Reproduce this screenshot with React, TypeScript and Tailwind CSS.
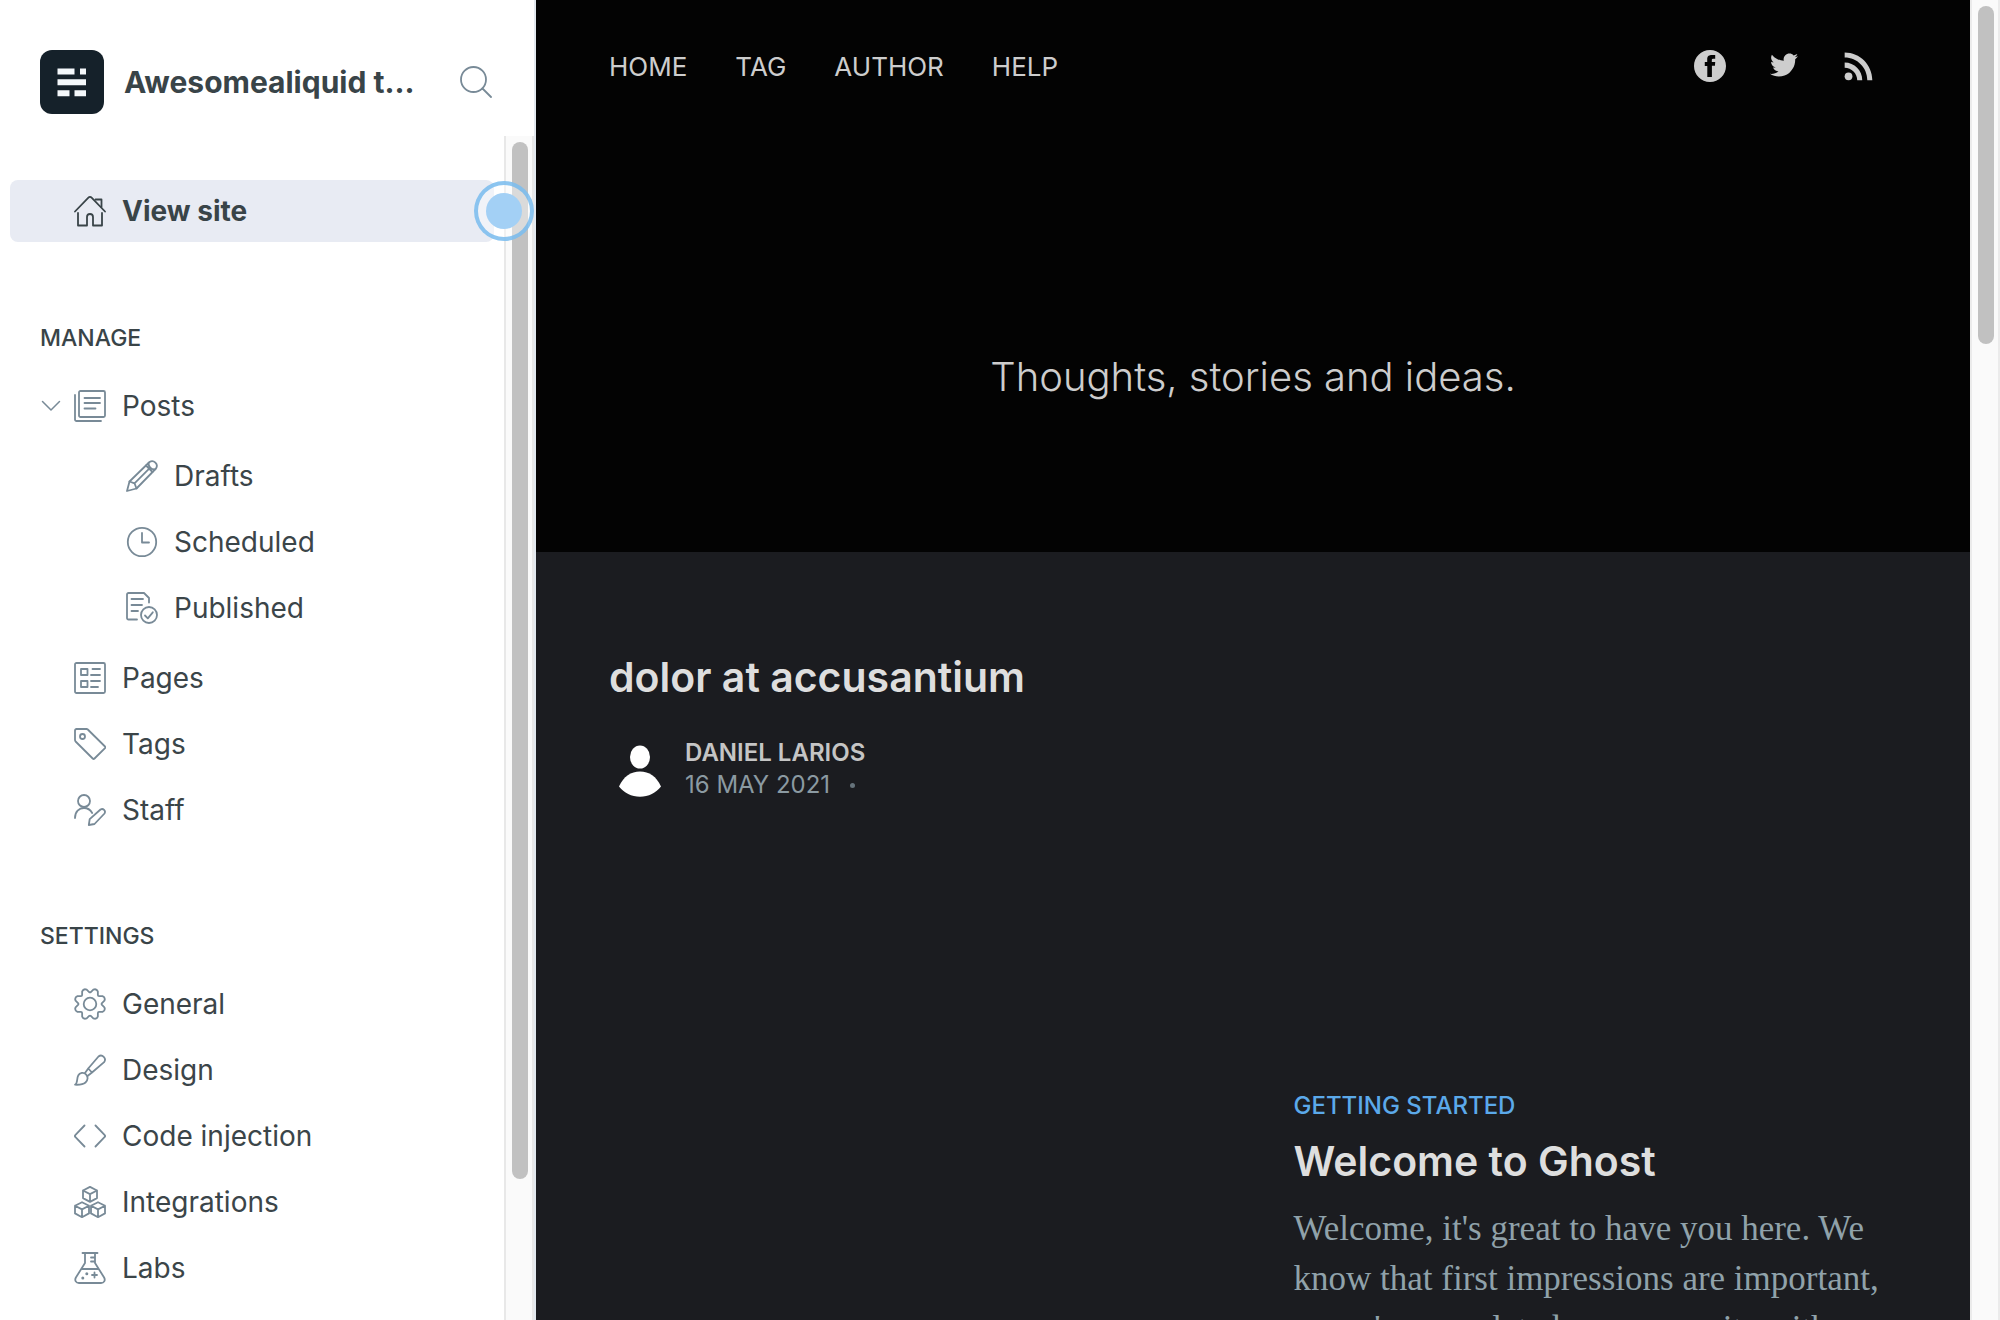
import React from "react";

const gearPath = (() => {
  const at = (deg: number, r: number) => {
    const a = (deg * Math.PI) / 180;
    return `${(16 + r * Math.cos(a)).toFixed(2)} ${(16 + r * Math.sin(a)).toFixed(2)}`;
  };
  let d = "";
  for (let k = 0; k < 8; k++) {
    const v = k * 45;
    d += `${k === 0 ? "M" : "L"}${at(v - 4, 12)}Q${at(v, 11.2)} ${at(v + 4, 12)}`;
    d += `L${at(v + 13, 14.8)}Q${at(v + 22.5, 17)} ${at(v + 32, 14.8)}`;
  }
  return d + "Z";
})();

const cube = (x: number, y: number) =>
  `M${x} ${y - 7.5}l7 3.6v7.6l-7 3.8-7-3.8v-7.6zM${x - 7} ${y - 3.9}l7 3.6 7-3.6M${x} ${y - 0.3}v7.8`;

const icons = {
  home: (
    <>
      <path d="M1 16.5L14.4 2.6a2.2 2.2 0 0 1 3.2 0L31 16.5" />
      <path d="M21.5 4.5h6V12" />
      <path d="M4 18v12.5h9V22a3 3 0 0 1 6 0v8.5h9V18" />
    </>
  ),
  posts: (
    <>
      <rect x="5" y="1" width="26" height="26" rx="1.5" />
      <path d="M1 5v24.5a1.5 1.5 0 0 0 1.5 1.5H27M10.5 8H26M10.5 13H26M10.5 18.500H21.5" />
    </>
  ),
  drafts: (
    <>
      <path d="M1 31l2.5-9.5L23.5 2a4.700 4.700 0 0 1 6.5 6.500L10.5 28.500z" />
      <path d="M3.5 21.5l5 1.8 2 5.2M20 5.5l6.5 6.500M22.5 3.2c.2 3.5 2.8 6 6.3 6.300M8.5 23.300L23.2 8.700" />
    </>
  ),
  scheduled: (
    <>
      <circle cx="16" cy="16" r="14.2" />
      <path d="M16 7v9.500h7" />
    </>
  ),
  published: (
    <>
      <path d="M11 27.500H2.500A1.5 1.5 0 0 1 1 26V2.500A1.5 1.5 0 0 1 2.5 1H18l5 5v4.500M5.5 7H17M5.5 13H16M5.5 19H12" />
      <circle cx="23" cy="23" r="8" />
      <path d="M19 23.5l2.8 2.8 5-6" />
    </>
  ),
  pages: (
    <>
      <rect x="1" y="1" width="30" height="30" rx="1.5" />
      <rect x="7" y="7" width="6.5" height="6" />
      <rect x="7" y="19" width="6.5" height="6" />
      <path d="M18.5 7H26M17 13h9M17 19h9M17 25h7" />
    </>
  ),
  tags: (
    <>
      <path d="M1 2.500A1.5 1.5 0 0 1 2.5 1H12.500a2 2 0 0 1 1.3.5L31 18.500a1.3 1.3 0 0 1 0 1.700L20.5 30.500a1.3 1.3 0 0 1-1.8 0L1.6 13.500A2 2 0 0 1 1 12z" />
      <circle cx="8.5" cy="8.5" r="2.5" />
    </>
  ),
  staff: (
    <>
      <circle cx="10" cy="7" r="6" />
      <path d="M1 24c0-6.5 4-10 9-10 3.5 0 6.5 2 8.2 5" />
      <path d="M14.8 31l.9-5.800L26.5 15.500a2.9 2.9 0 0 1 4 4L20.5 30z" />
    </>
  ),
  general: (
    <>
      <path d={gearPath} />
      <circle cx="16" cy="16" r="6.3" />
    </>
  ),
  design: (
    <>
      <path d="M1 30.700c3-1.7 1.5-6 3.2-9.2 1.5-3 5.5-3.4 7.8-1.2 2.3 2.4 2 6-.5 8.2-2.8 2.4-6.8 2.4-10.5 2.200z" />
      <path d="M11 19l3.2-4.500L24.5 2.500a4 4 0 0 1 5.6 5.600L18 18.500 13.5 22M14.2 14.500l3.8 4" />
    </>
  ),
  code: (
    <path d="M10.5 5.500L1.5 14.800a1.7 1.7 0 0 0 0 2.400l9 9.300M21.5 5.500l9 9.300a1.7 1.7 0 0 1 0 2.400l-9 9.300" />
  ),
  integrations: <path d={cube(16, 8.4) + cube(8, 23.7) + cube(24, 23.7)} />,
  labs: (
    <>
      <path d="M8.5 1h15M11 1v10L1.9 25.500C.3 28.500 2 31 5 31h22c3 0 4.7-2.5 3.1-5.500L21 11V1M7.2 17h17.600M21 5.500h-4M21 9.500h-4M20.5 20.500v5M18 23h5" />
      <path strokeWidth="3" d="M12.8 21.700h.01M8.8 26h.01" />
    </>
  ),
};

type IconName = keyof typeof icons;

function Icon({ name }: { name: IconName }) {
  return (
    <svg
      viewBox="0 0 32 32"
      aria-hidden="true"
      className="size-8 shrink-0"
      fill="none"
      stroke="currentColor"
      strokeWidth="1.8"
      strokeLinecap="round"
      strokeLinejoin="round"
    >
      {icons[name]}
    </svg>
  );
}

function NavItem({ icon, label, sub = false }: { icon: IconName; label: string; sub?: boolean }) {
  return (
    <li>
      <a
        href={"#" + icon}
        className={
          "flex h-[66px] items-center gap-4 text-[28px] text-[#3b4549] " + (sub ? "pl-[126px]" : "pl-[74px]")
        }
      >
        <span className="text-[#788a97]">
          <Icon name={icon} />
        </span>
        {label}
      </a>
    </li>
  );
}

function Sidebar() {
  return (
    <aside className="relative flex w-[536px] shrink-0 flex-col border-r-2 border-[#e3e9ef] bg-white">
      <header className="flex h-[136px] shrink-0 items-center pt-[28px] pr-[42px] pl-10">
        <svg viewBox="0 0 64 64" className="size-16 shrink-0" aria-hidden="true">
          <rect width="64" height="64" rx="12" fill="#15212a" />
          <path
            fill="#f4f8fb"
            d="M17.5 18.500h17v6h-17zM40 18.500h6v6h-6zM17.5 29.300H46v6H17.500zM17.5 40.200h12v6h-12zM34.5 40.200H46v6H34.500z"
          />
        </svg>
        <a href="#dashboard" className="ml-5 flex-1 text-[30px] font-bold whitespace-nowrap text-[#394448]">
          Awesomealiquid t...
        </a>
        <button type="button" aria-label="Search" className="size-8 text-[#788a97]">
          <svg viewBox="0 0 32 32" fill="none" stroke="currentColor" strokeWidth="1.8" strokeLinecap="round">
            <circle cx="13.5" cy="13.5" r="12.5" />
            <path d="M22.5 22.500l8.5 8.500" />
          </svg>
        </button>
      </header>

      <div className="flex min-h-0 flex-1">
        <nav className="min-w-0 flex-1 overflow-hidden pt-11">
          <a
            href="#site"
            className="mr-2.5 ml-2.5 flex h-[62px] items-center gap-4 rounded-lg bg-[#e8ebf3] pl-16 text-[28px] font-bold text-[#394448]"
          >
            <Icon name="home" />
            View site
          </a>

          <h2 className="mt-[82px] ml-10 text-[23px] leading-7 font-medium text-[#394448]">MANAGE</h2>
          <ul className="mt-[21px]">
            <li className="flex h-[66px] items-center text-[28px] text-[#3b4549]">
              <button type="button" aria-label="Collapse posts" className="ml-10 w-[34px] text-[#788a97]">
                <svg
                  viewBox="0 0 22 22"
                  className="size-[22px]"
                  fill="none"
                  stroke="currentColor"
                  strokeWidth="1.5"
                  strokeLinecap="round"
                  strokeLinejoin="round"
                >
                  <path d="M2.5 6.500l8.5 8.500 8.5-8.500" />
                </svg>
              </button>
              <a href="#posts" className="flex items-center gap-4">
                <span className="text-[#788a97]">
                  <Icon name="posts" />
                </span>
                Posts
              </a>
            </li>
            <li>
              <ul className="my-1">
                <NavItem icon="drafts" label="Drafts" sub />
                <NavItem icon="scheduled" label="Scheduled" sub />
                <NavItem icon="published" label="Published" sub />
              </ul>
            </li>
            <NavItem icon="pages" label="Pages" />
            <NavItem icon="tags" label="Tags" />
            <NavItem icon="staff" label="Staff" />
          </ul>

          <h2 className="mt-[79px] ml-10 text-[23px] leading-7 font-medium text-[#394448]">SETTINGS</h2>
          <ul className="mt-[21px]">
            <NavItem icon="general" label="General" />
            <NavItem icon="design" label="Design" />
            <NavItem icon="code" label="Code injection" />
            <NavItem icon="integrations" label="Integrations" />
            <NavItem icon="labs" label="Labs" />
          </ul>
        </nav>
        <div
          aria-hidden="true"
          className="flex w-[30px] shrink-0 flex-col border-x-2 border-[#e8e8e8] bg-[#fafafa] pt-1.5 pl-1.5"
        >
          <div className="h-[88%] w-4 rounded-full bg-[#c1c1c1]" />
        </div>
      </div>

      <div
        aria-hidden="true"
        className="absolute top-[181px] right-0 flex size-[60px] items-center justify-center rounded-full border-4 border-[#6fb6ec]/80 bg-white/40"
      >
        <div className="size-9 rounded-full bg-[#a3d0f5]" />
      </div>
    </aside>
  );
}

function SiteHeader() {
  return (
    <header className="flex h-[552px] flex-col bg-[#030303] px-[73px] text-[#cdcdcd]">
      <div className="flex h-[132px] shrink-0 items-center justify-between">
        <nav className="flex gap-12 text-[26px]">
          <a href="#home">HOME</a>
          <a href="#tag">TAG</a>
          <a href="#author">AUTHOR</a>
          <a href="#help">HELP</a>
        </nav>
        <div className="mr-[23px] flex items-center gap-[42px]">
          <a href="#facebook" aria-label="Facebook">
            <svg viewBox="0 0 32 32" className="size-8" fill="currentColor">
              <path d="M16 0c8.837 0 16 7.163 16 16s-7.163 16-16 16S0 24.837 0 16 7.163 0 16 0zm5.204 4.911h-3.546c-2.103 0-4.443.885-4.443 3.934.01 1.062 0 2.080 0 3.225h-2.433v3.872h2.509v11.147h4.610v-11.220h3.042l.275-3.810h-3.397s.007-1.695 0-2.187c0-1.205 1.253-1.136 1.329-1.136.596 0 1.756.002 2.054 0V4.911z" />
            </svg>
          </a>
          <a href="#twitter" aria-label="Twitter">
            <svg viewBox="0 1 32 32" className="size-8" fill="currentColor">
              <path d="M30.063 7.313c-.813 1.125-1.750 2.125-2.875 2.938v.750c0 1.563-.188 3.125-.688 4.625a15.088 15.088 0 0 1-2.063 4.438c-.875 1.438-2 2.688-3.250 3.813a15.015 15.015 0 0 1-4.625 2.563c-1.813.688-3.750 1-5.750 1-3.250 0-6.188-.875-8.875-2.625.438.063.875.125 1.375.125 2.688 0 5.063-.875 7.188-2.500-1.250 0-2.375-.375-3.375-1.125s-1.688-1.688-2.063-2.875c.438.063.813.125 1.125.125.500 0 1-.063 1.500-.250-1.313-.250-2.438-.938-3.313-1.938a5.673 5.673 0 0 1-1.313-3.688v-.063c.813.438 1.688.688 2.625.688a5.228 5.228 0 0 1-1.875-2c-.500-.875-.688-1.813-.688-2.750 0-1.063.250-2.063.750-2.938 1.438 1.750 3.188 3.188 5.250 4.250s4.313 1.688 6.688 1.813a5.579 5.579 0 0 1 1.500-5.438c1.125-1.125 2.500-1.688 4.125-1.688s3.063.625 4.188 1.813a11.480 11.480 0 0 0 3.688-1.375c-.438 1.375-1.313 2.438-2.563 3.188 1.125-.125 2.188-.438 3.313-.875z" />
            </svg>
          </a>
          <a href="#rss" aria-label="RSS">
            <svg viewBox="2.500 3 18 18" className="size-8" fill="currentColor">
              <circle cx="6.180" cy="17.820" r="2.180" />
              <path d="M4 4.440v2.830c7.030 0 12.730 5.700 12.730 12.730h2.830c0-8.590-6.970-15.560-15.560-15.560zm0 5.660v2.830c3.900 0 7.070 3.170 7.070 7.070h2.830c0-5.470-4.430-9.900-9.900-9.900z" />
            </svg>
          </a>
        </div>
      </div>
      <h1 className="mt-[215px] text-center text-[40px] leading-[60px] font-light">Thoughts, stories and ideas.</h1>
    </header>
  );
}

function Site() {
  return (
    <main className="min-w-0 flex-1 overflow-hidden bg-[#1b1c20]">
      <SiteHeader />
      <div className="px-[73px] pt-[98px]">
        <article>
          <h2 className="text-[41px] leading-[54px] font-semibold text-[#dedede]">
            <a href="#dolor">dolor at accusantium</a>
          </h2>
          <div className="mt-[33px] flex items-center gap-4">
            <svg viewBox="0 0 60 60" className="size-[60px]" fill="#fff" aria-hidden="true">
              <ellipse cx="31" cy="18" rx="10" ry="11.500" />
              <path d="M10 47.500C14.500 37.500 22 32.500 31 32.500s16.500 5 21 15C47 54 39.500 57.800 31 57.800S15 54 10 47.500z" />
            </svg>
            <div className="text-[24px] leading-8">
              <a href="#daniel" className="block font-semibold text-[#c5c5c5]">
                DANIEL LARIOS
              </a>
              <div className="flex items-center gap-5 text-[#8b9aa2]">
                <time dateTime="2021-05-16">16 MAY 2021</time>
                <span className="size-[5px] rounded-full bg-[#66737b]" />
              </div>
            </div>
          </div>
        </article>

        <article className="mt-[289px] grid grid-cols-[684fr_603fr]">
          <div className="col-start-2">
            <div className="text-[24px] leading-8 font-medium text-[#5ba9ea]">GETTING STARTED</div>
            <h2 className="mt-3 text-[41px] leading-[54px] font-semibold text-[#dedede]">
              <a href="#welcome">Welcome to Ghost</a>
            </h2>
            <p className="mt-4 font-['Liberation_Serif',serif] text-[35px] leading-[50px] text-[#90a2aa]">
              Welcome, it's great to have you here. We know that first impressions are important, so we've populated
              your new site with
            </p>
          </div>
        </article>
      </div>
    </main>
  );
}

export default function App() {
  return (
    <div className="flex h-screen overflow-hidden bg-white font-['Inter',sans-serif]">
      <Sidebar />
      <Site />
      <div
        aria-hidden="true"
        className="flex w-[30px] shrink-0 flex-col border-x-2 border-[#ebebeb] bg-[#fafafa] pt-1.5 pl-1.5"
      >
        <div className="h-[338px] w-4 rounded-full bg-[#c1c1c1]" />
      </div>
    </div>
  );
}
